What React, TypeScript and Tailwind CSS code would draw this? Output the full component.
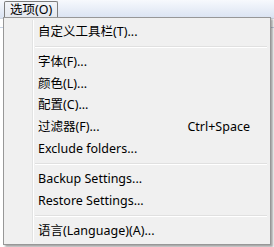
import type { ReactNode } from 'react'

const font = { fontFamily: '"Segoe UI", "Noto Sans", "Noto Sans CJK SC", sans-serif' }

type Entry = { label: string; shortcut?: string } | 'sep'

const entries: Entry[] = [
  { label: '自定义工具栏(T)...' },
  'sep',
  { label: '字体(F)...' },
  { label: '颜色(L)...' },
  { label: '配置(C)...' },
  { label: '过滤器(F)...', shortcut: 'Ctrl+Space' },
  { label: 'Exclude folders...' },
  'sep',
  { label: 'Backup Settings...' },
  { label: 'Restore Settings...' },
  'sep',
  { label: '语言(Language)(A)...' },
]

function MenuRow({ children, shortcut }: { children: ReactNode; shortcut?: string }) {
  return (
    <div className="flex h-[21.6px] items-center pl-[34px] pr-2">
      <span className="flex-1 whitespace-nowrap">{children}</span>
      {shortcut && <span className="mr-[12px] whitespace-nowrap">{shortcut}</span>}
    </div>
  )
}

export default function App() {
  return (
    <div className="relative h-[247px] w-[274px] overflow-hidden bg-white text-[12.5px] leading-none text-black" style={font}>
      <div className="flex h-[18px] items-start bg-gradient-to-b from-[#f7f9fd] to-[#dae3f2] pl-[4px] pt-[1px]">
        <div className="flex h-[17px] items-center rounded-t-[2px] border border-b-0 border-[#7d7d7d] bg-gradient-to-b from-[#f2f4f8] to-[#e4e8ef] px-[5px]">
          选项(O)
        </div>
      </div>

      <div className="border-t border-[#d0d6e0]">
        <div className="mt-[8px] h-px bg-[#c7d3e4]" />
      </div>

      <div className="absolute left-[3px] top-[17px] h-[228px] w-[268px] border border-[#979797] bg-[#f0f0f0] shadow-[2px_2px_2px_rgba(0,0,0,0.35)]">
        <div className="absolute bottom-[2px] left-[28px] top-[2px] w-px bg-[#e2e3e3]" />
        <div className="absolute bottom-[2px] left-[29px] top-[2px] w-px bg-white" />
        <div className="relative flex flex-col py-[3px]">
          {entries.map((e, i) =>
            e === 'sep' ? (
              <div key={i} className="flex h-[9px] flex-col justify-center pl-[31px] pr-[3px]">
                <div className="h-px bg-[#e0e0e0]" />
                <div className="h-px bg-white" />
              </div>
            ) : (
              <MenuRow key={i} shortcut={e.shortcut}>
                {e.label}
              </MenuRow>
            ),
          )}
        </div>
      </div>
    </div>
  )
}
